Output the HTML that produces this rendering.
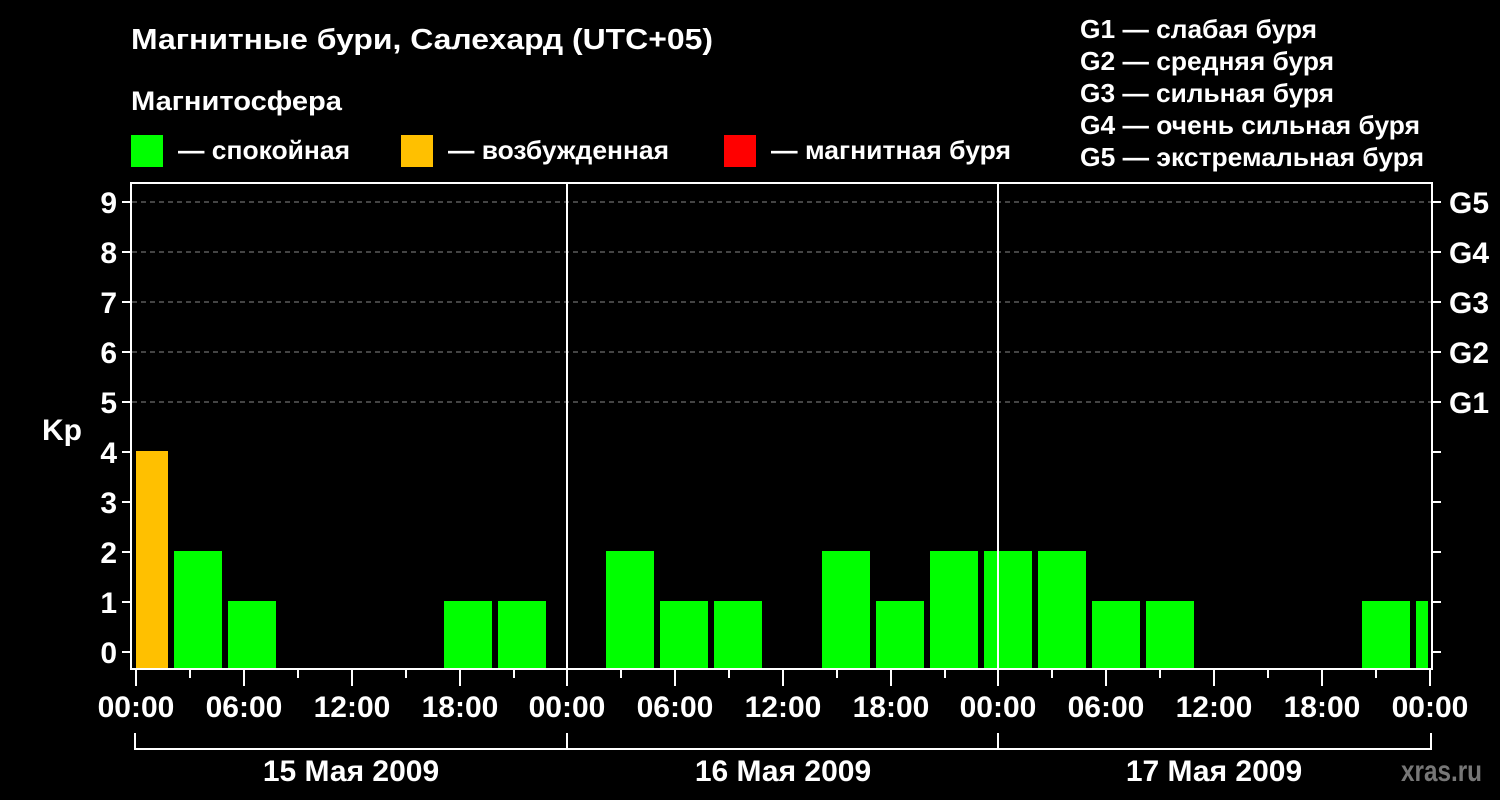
<!DOCTYPE html>
<html><head><meta charset="utf-8"><style>
body{margin:0;background:#000;width:1500px;height:800px;overflow:hidden}
svg{display:block}
text{font-family:"Liberation Sans",sans-serif;font-weight:bold;fill:#fff}
</style></head><body>
<svg width="1500" height="800" xmlns="http://www.w3.org/2000/svg">
<text x="131" y="49" font-size="29" textLength="582" lengthAdjust="spacingAndGlyphs">Магнитные бури, Салехард (UTC+05)</text>
<text x="131" y="110" font-size="27" textLength="211" lengthAdjust="spacingAndGlyphs">Магнитосфера</text>
<rect x="131" y="135" width="32" height="32" fill="#00ff00"/>
<text x="178" y="159" font-size="26" textLength="172" lengthAdjust="spacingAndGlyphs">— спокойная</text>
<rect x="401" y="135" width="32" height="32" fill="#ffc000"/>
<text x="448" y="159" font-size="26" textLength="221" lengthAdjust="spacingAndGlyphs">— возбужденная</text>
<rect x="724" y="135" width="32" height="32" fill="#ff0000"/>
<text x="771" y="159" font-size="26" textLength="240" lengthAdjust="spacingAndGlyphs">— магнитная буря</text>
<g font-size="26">
<text x="1080" y="38" textLength="237" lengthAdjust="spacingAndGlyphs">G1 — слабая буря</text>
<text x="1080" y="70" textLength="254" lengthAdjust="spacingAndGlyphs">G2 — средняя буря</text>
<text x="1080" y="102" textLength="254" lengthAdjust="spacingAndGlyphs">G3 — сильная буря</text>
<text x="1080" y="134" textLength="340" lengthAdjust="spacingAndGlyphs">G4 — очень сильная буря</text>
<text x="1080" y="166" textLength="344" lengthAdjust="spacingAndGlyphs">G5 — экстремальная буря</text>
</g>
<g stroke="#888" stroke-dasharray="5,4" stroke-width="1">
<line x1="132" y1="202" x2="1431" y2="202"/><line x1="132" y1="252" x2="1431" y2="252"/>
<line x1="132" y1="302" x2="1431" y2="302"/><line x1="132" y1="352" x2="1431" y2="352"/>
<line x1="132" y1="402" x2="1431" y2="402"/>
</g>
<g fill="#00ff00">
<rect x="174" y="551" width="48" height="117"/>
<rect x="228" y="601" width="48" height="67"/>
<rect x="444" y="601" width="48" height="67"/>
<rect x="498" y="601" width="48" height="67"/>
<rect x="606" y="551" width="48" height="117"/>
<rect x="660" y="601" width="48" height="67"/>
<rect x="714" y="601" width="48" height="67"/>
<rect x="822" y="551" width="48" height="117"/>
<rect x="876" y="601" width="48" height="67"/>
<rect x="930" y="551" width="48" height="117"/>
<rect x="984" y="551" width="48" height="117"/>
<rect x="1038" y="551" width="48" height="117"/>
<rect x="1092" y="601" width="48" height="67"/>
<rect x="1146" y="601" width="48" height="67"/>
<rect x="1362" y="601" width="48" height="67"/>
<rect x="1416" y="601" width="12" height="67"/>
</g>
<rect x="136" y="451" width="32" height="217" fill="#ffc000"/>
<g stroke="#fff" stroke-width="2" fill="none">
<rect x="131" y="183" width="1301" height="486"/>
<line x1="567" y1="183" x2="567" y2="669"/><line x1="998" y1="183" x2="998" y2="669"/>
<path d="M122 202h9M122 252h9M122 302h9M122 352h9M122 402h9M122 452h9M122 502h9M122 552h9M122 602h9M122 652h9"/>
<path d="M1432 202h9M1432 252h9M1432 302h9M1432 352h9M1432 402h9M1432 452h9M1432 502h9M1432 552h9M1432 602h9M1432 652h9"/>
<path d="M136 670v16M190 670v8M244 670v16M298 670v8M352 670v16M406 670v8M460 670v16M514 670v8M567 670v16M621 670v8M675 670v16M729 670v8M783 670v16M837 670v8M891 670v16M945 670v8M998 670v16M1052 670v8M1106 670v16M1160 670v8M1214 670v16M1268 670v8M1322 670v16M1376 670v8M1430 670v16"/>
<path d="M135 733v16h1296v-16M567 733v16M998 733v16"/>
</g>
<g font-size="30" text-anchor="end">
<text x="117" y="213">9</text><text x="117" y="263">8</text><text x="117" y="313">7</text>
<text x="117" y="363">6</text><text x="117" y="413">5</text><text x="117" y="463">4</text>
<text x="117" y="513">3</text><text x="117" y="563">2</text><text x="117" y="613">1</text><text x="117" y="663">0</text>
</g>
<text x="42" y="440" font-size="30">Kp</text>
<g font-size="30">
<text x="1449" y="213">G5</text><text x="1449" y="263">G4</text><text x="1449" y="313">G3</text>
<text x="1449" y="363">G2</text><text x="1449" y="413">G1</text>
</g>
<g font-size="30" text-anchor="middle">
<text x="136" y="717">00:00</text><text x="244" y="717">06:00</text><text x="352" y="717">12:00</text><text x="460" y="717">18:00</text>
<text x="567" y="717">00:00</text><text x="675" y="717">06:00</text><text x="783" y="717">12:00</text><text x="891" y="717">18:00</text>
<text x="998" y="717">00:00</text><text x="1106" y="717">06:00</text><text x="1214" y="717">12:00</text><text x="1322" y="717">18:00</text>
<text x="1430" y="717">00:00</text>
<text x="351" y="781">15 Мая 2009</text><text x="783" y="781">16 Мая 2009</text><text x="1214" y="781">17 Мая 2009</text>
</g>
<text x="1401" y="781" font-size="30" style="fill:#777" textLength="81" lengthAdjust="spacingAndGlyphs">xras.ru</text>
</svg>
</body></html>
